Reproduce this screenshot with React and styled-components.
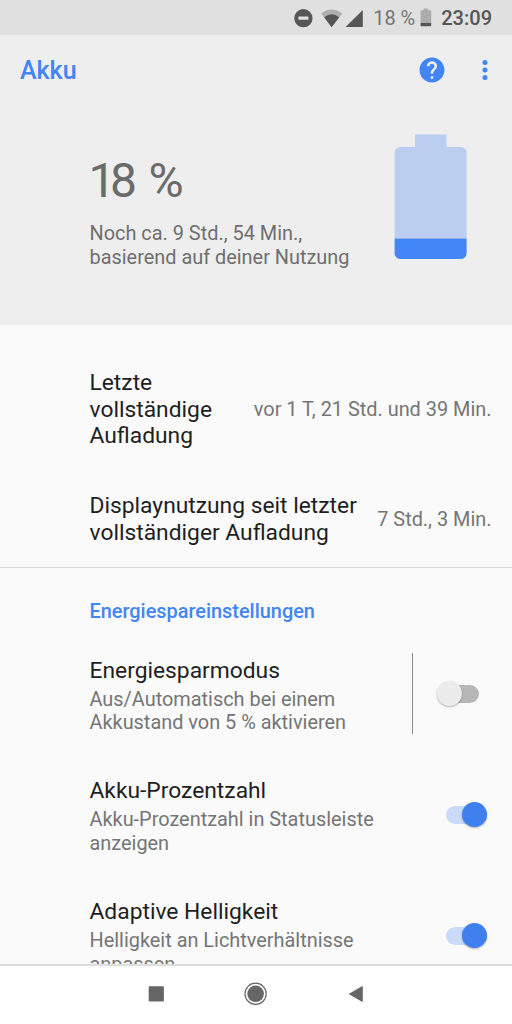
import React from 'react';
import styled, { createGlobalStyle, css } from 'styled-components';

const blue = '#4285f4';
const textPrimary = '#1f1f1f';
const textSecondary = '#757575';

const textTitle = css`
  font-size: 22.8px;
  line-height: 26.67px;
  color: ${textPrimary};
`

const textBody = css`
  font-size: 19.9px;
  line-height: 23.4px;
  color: ${textSecondary};
`

const stats = [
  { label: 'Letzte vollständige Aufladung', value: 'vor 1 T, 21 Std. und 39 Min.' },
  { label: 'Displaynutzung seit letzter vollständiger Aufladung', value: '7 Std., 3 Min.' },
];

const settings = [
  { title: 'Energiesparmodus', summary: 'Aus/Automatisch bei einem Akkustand von 5 % aktivieren', on: false, split: true },
  { title: 'Akku-Prozentzahl', summary: 'Akku-Prozentzahl in Statusleiste anzeigen', on: true },
  { title: 'Adaptive Helligkeit', summary: 'Helligkeit an Lichtverhältnisse anpassen', on: true },
];

function StatusIcons() {
  return (
    <svg width="70" height="20" viewBox="294 7 70 20">
      <circle cx="303.4" cy="17.2" r="9.1" fill="#565656" />
      <rect x="298.4" y="15.6" width="10" height="3.2" rx="0.6" fill="#e0e0e0" />
      <path d="M331.6 26.2 L321.2 12.4 Q331.6 4.6 342.2 12.4 Z" fill="#aeaeae" />
      <path d="M331.6 26.2 L324.2 16.2 Q331.6 10.4 339.2 16.2 Z" fill="#565656" />
      <path d="M345.6 26 L362.8 9 V26 Z" fill="#565656" />
    </svg>
  )
}

function SmallBattery() {
  return (
    <svg width="12" height="19" viewBox="0 0 12 19">
      <path d="M3.6 0.5 H8.2 V2.3 H10.3 Q11.2 2.3 11.2 3.2 V15 H0.6 V3.2 Q0.6 2.3 1.5 2.3 H3.6 Z" fill="#acacac" />
      <path d="M0.6 15 H11.2 V17.4 Q11.2 18.3 10.3 18.3 H1.5 Q0.6 18.3 0.6 17.4 Z" fill="#565656" />
    </svg>
  )
}

function BigBattery() {
  return (
    <svg width="73" height="126" viewBox="0 0 73 126">
      <path d="M21 0.5 H52.5 V13 H66 Q72.6 13 72.6 19.5 V104.5 H0.6 V19.5 Q0.6 13 7 13 H21 Z" fill="#bbceef" />
      <path d="M0.6 104.5 H72.6 V118.5 Q72.6 125 66 125 H7 Q0.6 125 0.6 118.5 Z" fill={blue} />
    </svg>
  )
}

function HelpIcon() {
  return (
    <svg width="30" height="30" viewBox="0 0 24 24" fill={blue}>
      <path d="M12 2C6.48 2 2 6.48 2 12s4.48 10 10 10 10-4.48 10-10S17.52 2 12 2zm1 17h-2v-2h2v2zm2.07-7.75l-.9.92C13.45 12.9 13 13.5 13 15h-2v-.5c0-1.1.45-2.1 1.17-2.83l1.24-1.26c.37-.36.59-.86.59-1.41 0-1.1-.9-2-2-2s-2 .9-2 2H8c0-2.21 1.79-4 4-4s4 1.79 4 4c0 .88-.36 1.68-.93 2.25z" />
    </svg>
  )
}

function MoreIcon() {
  return (
    <svg width="6" height="22" viewBox="0 0 6 22" fill={blue}>
      <circle cx="3" cy="3.4" r="2.5" />
      <circle cx="3" cy="10.9" r="2.5" />
      <circle cx="3" cy="18.4" r="2.5" />
    </svg>
  )
}

function NavIcons() {
  return (
    <svg width="216" height="24" viewBox="148 982 216 24" fill="#666666">
      <rect x="148.7" y="986.2" width="15.2" height="15.4" rx="0.8" />
      <circle cx="255.6" cy="993.8" r="10.6" fill="none" stroke="#666666" strokeWidth="1.2" />
      <circle cx="255.6" cy="993.8" r="8.3" />
      <path d="M348.6 994 L362 986.2 Q362.8 985.8 362.8 986.6 V1001.2 Q362.8 1002.2 362 1001.7 Z" />
    </svg>
  )
}

export default function App() {
  return (
    <Screen>
      <GlobalStyle />
      <StatusBar>
        <StatusIcons />
        <StatusPercent>18 %</StatusPercent>
        <SmallBattery />
        <Clock>23:09</Clock>
      </StatusBar>

      <Header>
        <Toolbar>
          <PageTitle>Akku</PageTitle>
          <ToolButton aria-label="Hilfe"><HelpIcon /></ToolButton>
          <ToolButton aria-label="Mehr"><MoreIcon /></ToolButton>
        </Toolbar>
        <Summary>
          <SummaryText>
            <Percent>18 %</Percent>
            <Remaining>Noch ca. 9 Std., 54 Min., basierend auf deiner Nutzung</Remaining>
          </SummaryText>
          <BigBattery />
        </Summary>
      </Header>

      <Content>
        <Stats>
          {stats.map(s => (
            <StatRow key={s.label}>
              <StatLabel>{s.label}</StatLabel>
              <StatValue>{s.value}</StatValue>
            </StatRow>
          ))}
        </Stats>
        <SectionTitle>Energiespareinstellungen</SectionTitle>
        {settings.map(s => (
          <SettingRow key={s.title}>
            <SettingText>
              <SettingTitle>{s.title}</SettingTitle>
              <SettingSummary>{s.summary}</SettingSummary>
            </SettingText>
            <SwitchArea $split={s.split}>
              <Track $on={s.on}>
                <Thumb $on={s.on} />
              </Track>
            </SwitchArea>
          </SettingRow>
        ))}
      </Content>

      <NavBar>
        <NavIcons />
      </NavBar>
    </Screen>
  )
}

const GlobalStyle = createGlobalStyle`
  body {
    margin: 0;
    background: #fafafa;
  }
  * {
    box-sizing: border-box;
  }
  svg {
    display: block;
    flex-shrink: 0;
  }
`

const Screen = styled.div`
  display: flex;
  flex-direction: column;
  width: 512px;
  height: 1024px;
  overflow: hidden;
  background: #fafafa;
  font-family: Roboto, "Liberation Sans", sans-serif;
`

const StatusBar = styled.div`
  display: flex;
  align-items: center;
  justify-content: flex-end;
  flex-shrink: 0;
  height: 35px;
  padding-right: 20px;
  background: #e0e0e0;
  font-size: 20px;
  line-height: 24px;
`

const StatusPercent = styled.span`
  margin: 1px 5px 0 9px;
  color: #767676;
`

const Clock = styled.span`
  margin: 1px 0 0 9px;
  font-weight: 500;
  color: #565656;
`

const Header = styled.header`
  flex-shrink: 0;
  height: 290.4px;
  background: #eeeeee;
`

const Toolbar = styled.div`
  display: flex;
  align-items: center;
  height: 69px;
  padding: 0 24.5px 0 20px;
`

const PageTitle = styled.h1`
  flex: 1;
  margin: 0;
  padding-top: 3px;
  font-size: 25px;
  font-weight: 500;
  line-height: 30px;
  color: ${blue};
`

const ToolButton = styled.button`
  display: flex;
  padding: 0;
  border: none;
  background: none;

  & + & {
    margin-left: 34.5px;
  }
`

const Summary = styled.div`
  display: flex;
  justify-content: space-between;
  padding: 30px 44.6px 0 89.5px;
`

const SummaryText = styled.div`
  width: 270px;
  padding-top: 19px;
`

const Percent = styled.div`
  margin-left: -1px;
  font-size: 48px;
  line-height: 56px;
  letter-spacing: -5.5px;
  word-spacing: 10.7px;
  color: #6b6b6b;
`

const Remaining = styled.div`
  ${textBody}
  margin-top: 13.2px;
  color: #6e6e6e;
`

const Content = styled.main`
  flex: 1;
  min-height: 0;
  overflow: hidden;
`

const Stats = styled.div`
  display: flex;
  flex-direction: column;
  gap: 43.5px;
  height: 242.6px;
  padding: 44.5px 20.5px 0 89.5px;
  border-bottom: 1px solid #dadada;
`

const StatRow = styled.div`
  display: flex;
  align-items: center;
  gap: 16px;
`

const StatLabel = styled.div`
  ${textTitle}
  flex: 1;
`

const StatValue = styled.div`
  ${textBody}
  white-space: nowrap;
`

const SectionTitle = styled.h2`
  ${textBody}
  margin: 32px 0 10.2px 89.5px;
  font-weight: 500;
  color: ${blue};
`

const SettingRow = styled.div`
  display: flex;
  align-items: center;
  height: 120.8px;
  padding-left: 89.5px;
`

const SettingText = styled.div`
  flex: 1;
  padding: 4px 30px 0 0;
`

const SettingTitle = styled.div`
  ${textTitle}
`

const SettingSummary = styled.div`
  ${textBody}
  margin-top: 3.2px;
`

const SwitchArea = styled.div`
  display: flex;
  align-items: center;
  flex-shrink: 0;
  width: 100px;
  height: 81px;
  padding-left: 32.6px;
  border-left: 1px solid ${props => props.$split ? '#8c8c8c' : 'transparent'};
`

const Track = styled.div`
  display: flex;
  align-items: center;
  justify-content: ${props => props.$on ? 'flex-end' : 'flex-start'};
  width: 33px;
  height: 18px;
  border-radius: 9px;
  background: ${props => props.$on ? '#c9dafa' : '#b7b7b7'};
`

const Thumb = styled.div`
  flex-shrink: 0;
  width: 25px;
  height: 25px;
  margin: 0 -8.5px;
  border-radius: 50%;
  background: ${props => props.$on ? '#4080ee' : '#ececec'};
  box-shadow: 0 1px 2px rgba(0, 0, 0, 0.3);
`

const NavBar = styled.nav`
  display: flex;
  justify-content: center;
  flex-shrink: 0;
  height: 60px;
  padding-top: 16px;
  border-top: 2px solid #dedede;
  background: #fefefe;
`
